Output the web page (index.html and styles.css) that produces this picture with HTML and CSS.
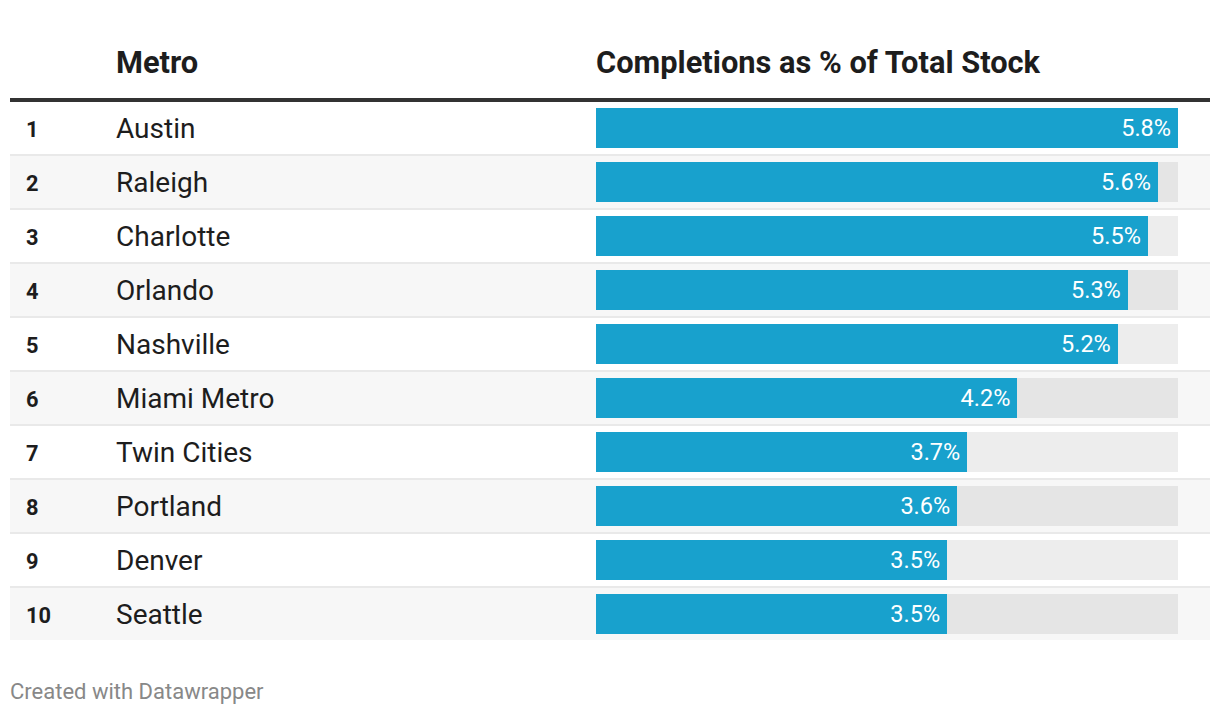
FILE: index.html
```html
<!DOCTYPE html>
<html lang="en">
<head>
<meta charset="utf-8">
<title>Completions as % of Total Stock</title>
<link rel="stylesheet" href="styles.css">
</head>
<body>
<div class="chart">
  <div class="head">
    <div class="h-rank"></div>
    <div class="h-name">Metro</div>
    <div class="h-bar">Completions as % of Total Stock</div>
  </div>
  <div class="body">
    <div class="row"><div class="rank">1</div><div class="name">Austin</div><div class="cell"><div class="track"><div class="bar" style="width:100%"><span class="val">5.8%</span></div></div></div></div>
    <div class="row"><div class="rank">2</div><div class="name">Raleigh</div><div class="cell"><div class="track"><div class="bar" style="width:96.55%"><span class="val">5.6%</span></div></div></div></div>
    <div class="row"><div class="rank">3</div><div class="name">Charlotte</div><div class="cell"><div class="track"><div class="bar" style="width:94.83%"><span class="val">5.5%</span></div></div></div></div>
    <div class="row"><div class="rank">4</div><div class="name">Orlando</div><div class="cell"><div class="track"><div class="bar" style="width:91.38%"><span class="val">5.3%</span></div></div></div></div>
    <div class="row"><div class="rank">5</div><div class="name">Nashville</div><div class="cell"><div class="track"><div class="bar" style="width:89.66%"><span class="val">5.2%</span></div></div></div></div>
    <div class="row"><div class="rank">6</div><div class="name">Miami Metro</div><div class="cell"><div class="track"><div class="bar" style="width:72.41%"><span class="val">4.2%</span></div></div></div></div>
    <div class="row"><div class="rank">7</div><div class="name">Twin Cities</div><div class="cell"><div class="track"><div class="bar" style="width:63.79%"><span class="val">3.7%</span></div></div></div></div>
    <div class="row"><div class="rank">8</div><div class="name">Portland</div><div class="cell"><div class="track"><div class="bar" style="width:62.07%"><span class="val">3.6%</span></div></div></div></div>
    <div class="row"><div class="rank">9</div><div class="name">Denver</div><div class="cell"><div class="track"><div class="bar" style="width:60.34%"><span class="val">3.5%</span></div></div></div></div>
    <div class="row"><div class="rank">10</div><div class="name">Seattle</div><div class="cell"><div class="track"><div class="bar" style="width:60.34%"><span class="val">3.5%</span></div></div></div></div>
  </div>
  <div class="footer">Created with Datawrapper</div>
</div>
</body>
</html>
```

FILE: styles.css
```css
* { box-sizing: border-box; }
html, body { margin: 0; padding: 0; background: #ffffff; }
body {
  font-family: Roboto, "Liberation Sans", Arial, sans-serif;
  color: #1d1d1d;
}
.chart {
  padding: 0 10px;
}
.head {
  display: grid;
  grid-template-columns: 106px 480px 1fr;
  height: 102px;
  align-items: end;
  padding-bottom: 17px;
  border-bottom: 4px solid #333333;
  font-weight: 700;
  font-size: 30.8px;
  line-height: 36px;
  color: #1d1d1d;
}
.row {
  display: grid;
  grid-template-columns: 106px 480px 1fr;
  align-items: center;
  height: 54px;
  border-bottom: 2px solid #e9e9e9;
}
.row:nth-child(even) { background: #f7f7f7; }
.row:last-child { border-bottom: none; height: 52px; }
.rank {
  padding-left: 16px;
  padding-top: 2px;
  font-size: 21.8px;
  font-weight: 700;
  color: #1d1d1d;
}
.name {
  padding-top: 2px;
  font-size: 28px;
  line-height: 34px;
}
.cell {
  padding-right: 32px;
}
.track {
  height: 40px;
  background: rgba(0, 0, 0, 0.07);
}
.bar {
  height: 40px;
  background: #18a1cd;
  display: flex;
  align-items: center;
  justify-content: flex-end;
  padding-right: 7px;
}
.val {
  color: #ffffff;
  font-size: 23.5px;
  line-height: 28px;
}
.footer {
  margin-top: 39px;
  font-size: 22px;
  line-height: 26px;
  color: #888888;
}
```
